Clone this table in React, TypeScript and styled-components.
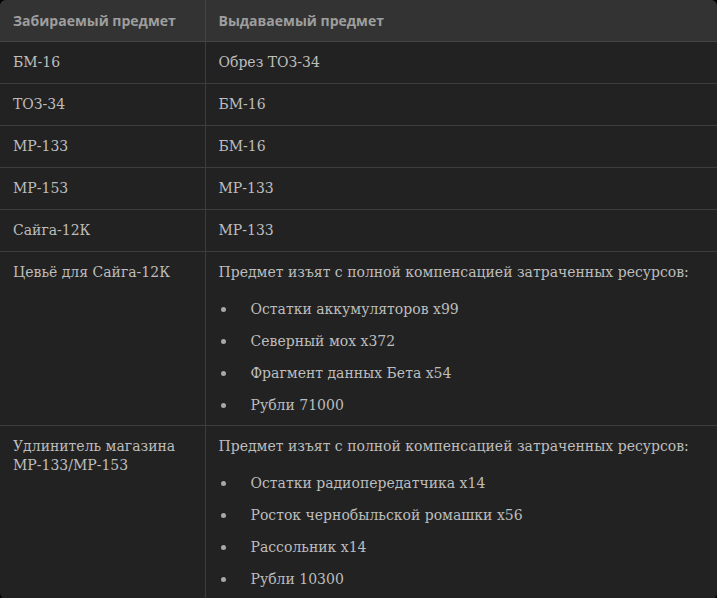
import React from "react";
import styled, { createGlobalStyle } from "styled-components";

const Global = createGlobalStyle`
  html, body { margin: 0; padding: 0; background: #000; }
  body { width: 717px; height: 598px; overflow: hidden; }
  *, *::before, *::after { box-sizing: border-box; }
`;

const Wrap = styled.div`
  width: 717px;
  border-radius: 6px;
  overflow: hidden;
  background: #222222;
`;

const Table = styled.table`
  width: 100%;
  border-collapse: collapse;
  table-layout: fixed;
`;

const Th = styled.th<{ $w?: number }>`
  ${(p) => (p.$w ? `width: ${p.$w}px;` : "")}
  background: #333333;
  color: #9e9e9e;
  font-family: "Open Sans", "Noto Sans", sans-serif;
  font-weight: 700;
  font-size: 14px;
  line-height: 19px;
  text-align: left;
  padding: 11px 13px;
  border-bottom: 1px solid #444;
  & + & { border-left: 1px solid #444; }
`;

const Tr = styled.tr`
  & + & td { border-top: 1px solid #3d3d3d; }
`;

const Td = styled.td`
  vertical-align: top;
  color: #bdbdbd;
  font-family: "DejaVu Serif", serif;
  font-size: 14px;
  line-height: 19px;
  padding: 11px 13px;
  & + & { border-left: 1px solid #3d3d3d; }
`;

const Para = styled.div`
  white-space: nowrap;
`;

const List = styled.ul`
  list-style: none;
  margin: 18px 0 -1px;
  padding: 0;
  display: flex;
  flex-direction: column;
  gap: 13px;
`;

const Item = styled.li`
  display: flex;
  align-items: center;
`;

const Bullet = styled.span`
  width: 5px;
  height: 5px;
  border-radius: 50%;
  background: #a8a8a8;
  margin: 0 25px 0 2px;
  flex: none;
`;

const simple: [string, string][] = [
  ["БМ-16", "Обрез ТОЗ-34"],
  ["ТОЗ-34", "БМ-16"],
  ["МР-133", "БМ-16"],
  ["МР-153", "МР-133"],
  ["Сайга-12К", "МР-133"],
];

const complex: { name: React.ReactNode; items: string[] }[] = [
  {
    name: "Цевьё для Сайга-12К",
    items: ["Остатки аккумуляторов x99", "Северный мох x372", "Фрагмент данных Бета x54", "Рубли 71000"],
  },
  {
    name: (
      <>
        Удлинитель магазина
        <br />
        МР-133/МР-153
      </>
    ),
    items: ["Остатки радиопередатчика x14", "Росток чернобыльской ромашки x56", "Рассольник x14", "Рубли 10300"],
  },
];

export default function App() {
  return (
    <>
      <Global />
      <Wrap>
        <Table>
          <thead>
            <tr>
              <Th $w={205}>Забираемый предмет</Th>
              <Th>Выдаваемый предмет</Th>
            </tr>
          </thead>
          <tbody>
            {simple.map(([a, b]) => (
              <Tr key={a}>
                <Td>{a}</Td>
                <Td>{b}</Td>
              </Tr>
            ))}
            {complex.map((c, i) => (
              <Tr key={i}>
                <Td>{c.name}</Td>
                <Td>
                  <Para>Предмет изъят с полной компенсацией затраченных ресурсов:</Para>
                  <List>
                    {c.items.map((it) => (
                      <Item key={it}>
                        <Bullet />
                        {it}
                      </Item>
                    ))}
                  </List>
                </Td>
              </Tr>
            ))}
          </tbody>
        </Table>
      </Wrap>
    </>
  );
}
